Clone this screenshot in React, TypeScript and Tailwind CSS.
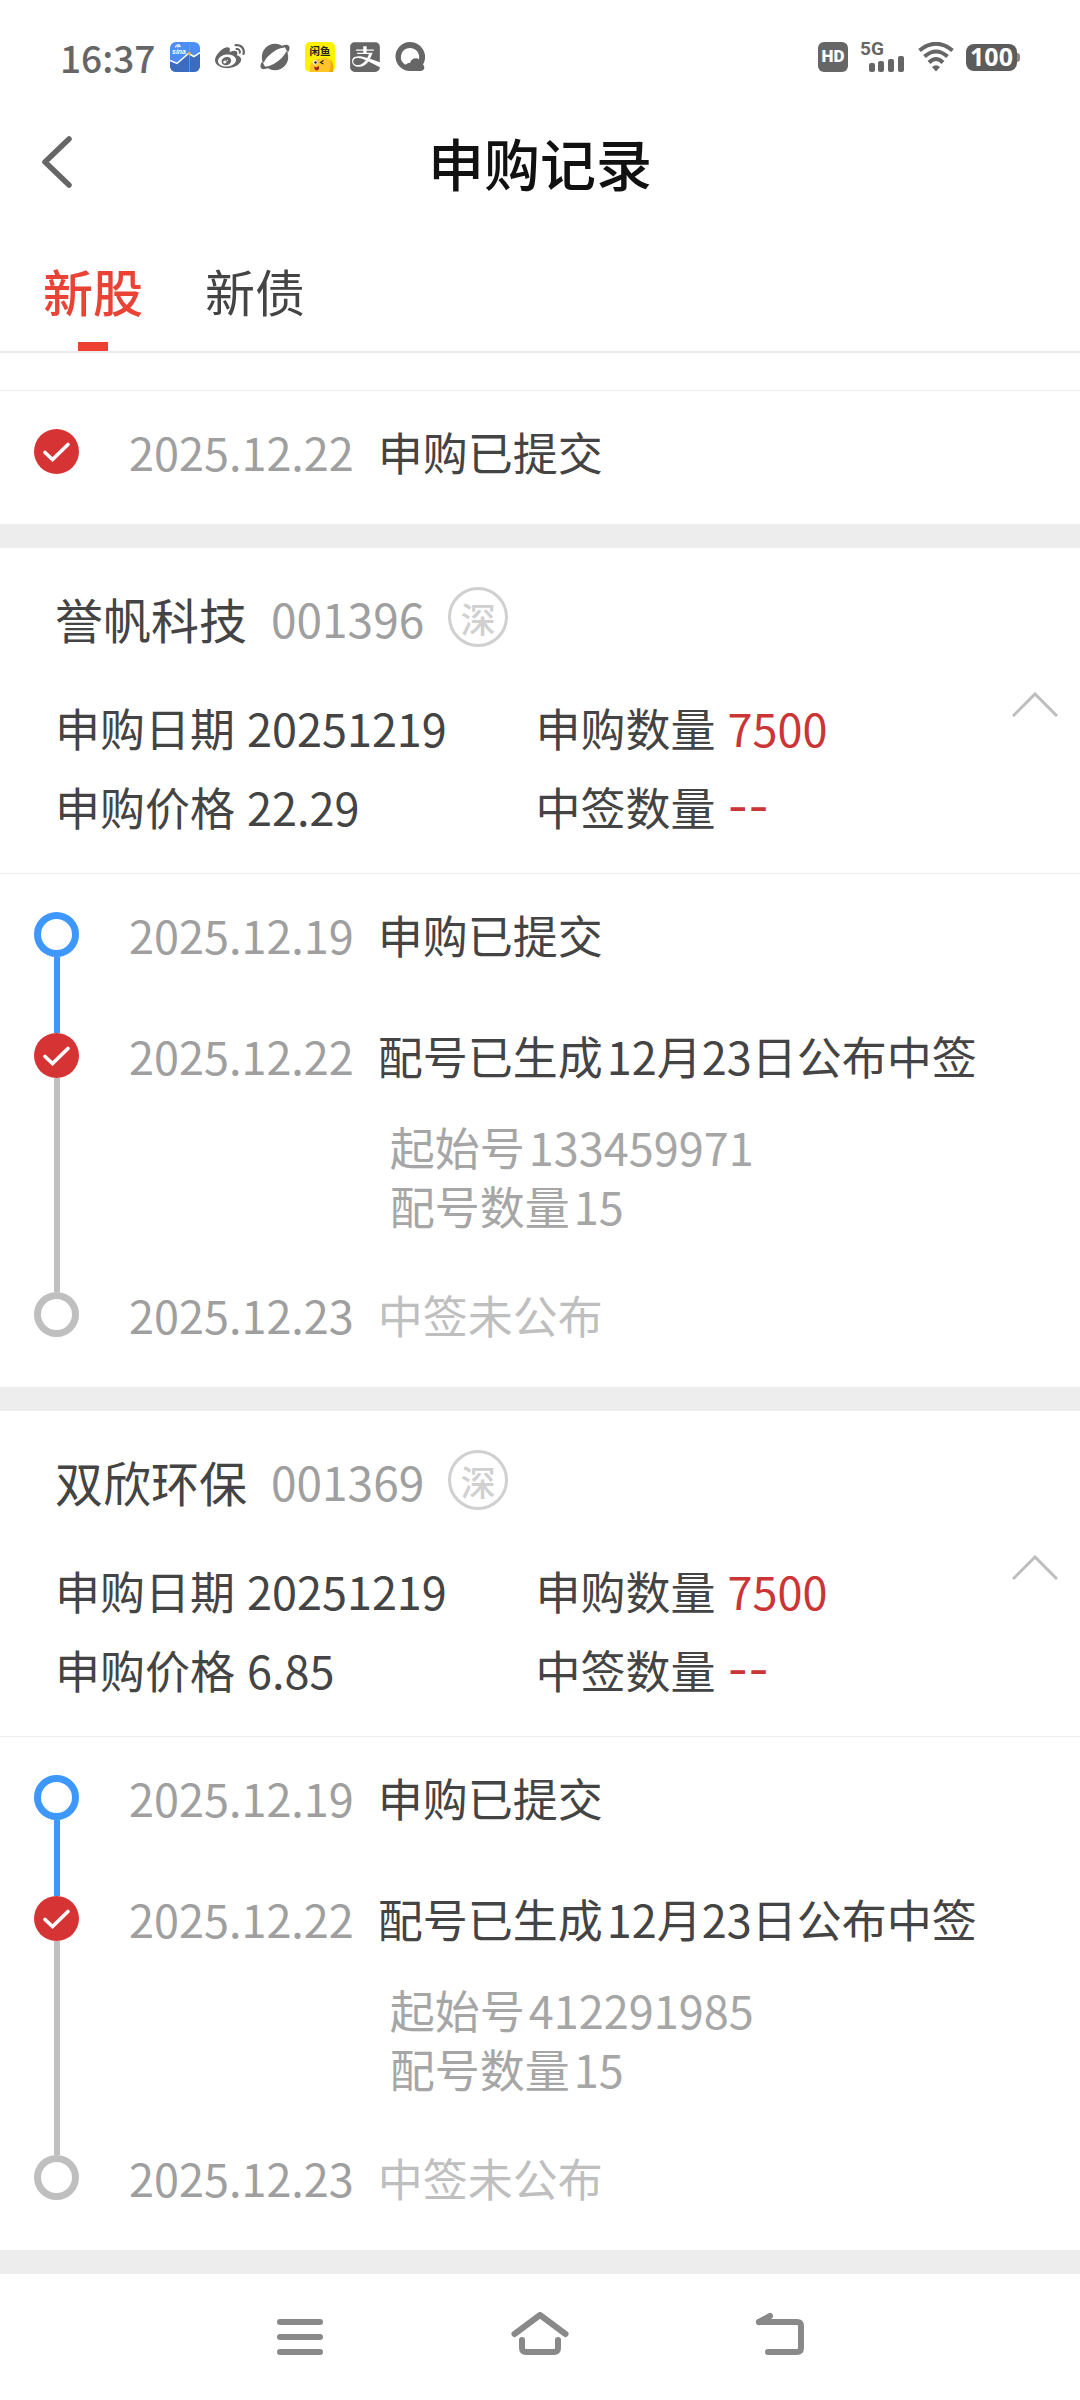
import { useState, type ReactNode } from "react";
import { FaAlipay, FaWeibo } from "react-icons/fa";

type StepState = "start" | "done" | "pending";

type Step = {
  date: string;
  state: StepState;
  title: string;
  note?: string;
  details?: { label: string; value: string }[];
};

type Subscription = {
  name: string;
  code: string;
  date: string;
  price: string;
  amount: string;
  won: string;
  steps: Step[];
};

const buildSteps = (startNo: string): Step[] => [
  { date: "2025.12.19", state: "start", title: "申购已提交" },
  {
    date: "2025.12.22",
    state: "done",
    title: "配号已生成",
    note: "12月23日公布中签",
    details: [
      { label: "起始号", value: startNo },
      { label: "配号数量", value: "15" },
    ],
  },
  { date: "2025.12.23", state: "pending", title: "中签未公布" },
];

const subscriptions: Subscription[] = [
  {
    name: "誉帆科技",
    code: "001396",
    date: "20251219",
    price: "22.29",
    amount: "7500",
    won: "--",
    steps: buildSteps("133459971"),
  },
  {
    name: "双欣环保",
    code: "001369",
    date: "20251219",
    price: "6.85",
    amount: "7500",
    won: "--",
    steps: buildSteps("412291985"),
  },
];

function FinanceIcon() {
  return (
    <svg viewBox="0 0 30 30" className="size-[30px]" aria-hidden="true">
      <rect width="30" height="30" rx="6" fill="#4d8df6" />
      <path d="M0 19 7 22 18 11 23 15 30 10V24a6 6 0 0 1-6 6H6a6 6 0 0 1-6-6Z" fill="#3b6cc0" />
      <path d="M19.500 0V30" stroke="#8b93bd" strokeWidth="0.8" />
      <path d="M0 18.500 7 21.500 18.500 11.500 24 14.500 30 10.500" fill="none" stroke="#fff" strokeWidth="1.500" />
      <circle cx="19.300" cy="11.500" r="1.700" fill="#e8a860" />
      <path d="M5.500 5.500C5.500 3 8.500 2 10 3.500M7.500 5.500c0-1.500 2.500-2 3-.5" fill="none" stroke="#fff" strokeWidth="1.200" />
      <text x="2" y="11.500" fontSize="7" fontWeight="700" fontStyle="italic" fontFamily="Liberation Sans, sans-serif" fill="#fff">
        sina
      </text>
    </svg>
  );
}

function PlanetIcon() {
  return (
    <svg viewBox="0 0 30 30" className="size-[30px] overflow-visible" aria-hidden="true">
      <circle cx="15" cy="15" r="13.200" fill="#666" />
      <ellipse cx="15" cy="15" rx="17.800" ry="6.500" transform="rotate(-38 15 15)" fill="#666" />
      <ellipse cx="15" cy="15" rx="13.600" ry="5.200" transform="rotate(-38 15 15)" fill="#fff" />
      <path d="M2.500 19.500 6 25M24 5l3.500 5.500" stroke="#fff" strokeWidth="0.800" />
    </svg>
  );
}

function XianyuIcon() {
  return (
    <svg viewBox="0 0 30 30" className="size-[30px]" aria-hidden="true">
      <rect width="30" height="30" rx="5" fill="#fff200" />
      <path d="M5 30c-1-8 2-13 9-13 3 0 4-2 6-1.500 5 1 8 6 8 14.500Z" fill="#ffc526" />
      <path d="M25 17c3 3 4 8 3 13h-4c2-4 2-9 1-13Z" fill="#f5a800" />
      <text x="15" y="13" textAnchor="middle" fontSize="10.500" fontWeight="700" fontFamily="Noto Sans CJK SC, sans-serif" fill="#222">
        闲鱼
      </text>
      <circle cx="10" cy="20.500" r="2.300" fill="#fff" />
      <circle cx="10.500" cy="20.500" r="1.200" fill="#222" />
      <path d="m18.500 18.500-3 2 3 1.500" fill="none" stroke="#222" strokeWidth="1.100" />
      <path d="M9 24.500q3 1.500 5-.5.500 4-2 4.500-2.500 0-3-4Z" fill="#a8221c" />
    </svg>
  );
}

function BrowserIcon() {
  return (
    <svg viewBox="0 0 30 30" className="size-[30px]" aria-hidden="true">
      <path
        fillRule="evenodd"
        fill="#666"
        d="M15 0a15 15 0 0 1 13 22.500c2 2 2 6-2 6.500H15A14.500 14.500 0 0 1 15 0Zm0 6a9 9 0 0 0-4.500 16.800c1.500-1.500 3-2 4.500-1.800 1-5 7-6 8.800-3.500A9 9 0 0 0 15 6Z"
      />
    </svg>
  );
}

function SignalIcon() {
  return (
    <div className="flex h-[30px] w-[46px] flex-col">
      <span className="font-[Roboto,sans-serif] text-[19px] leading-[14px] font-bold">5G</span>
      <svg viewBox="0 0 46 16" className="h-4 w-[46px] overflow-visible" fill="#666" aria-hidden="true">
        <rect x="9" y="7" width="6" height="9" rx="2" />
        <rect x="18" y="5" width="6" height="11" rx="2" />
        <rect x="28" y="3" width="6" height="13" rx="2" />
        <rect x="38" y="0" width="6" height="16" rx="2" />
      </svg>
    </div>
  );
}

function WifiIcon() {
  return (
    <svg viewBox="0 0 36 30" className="h-[30px] w-9" aria-hidden="true">
      <g fill="none" stroke="#666" strokeWidth="4">
        <path d="M1.500 8.500Q18-5 34.500 8.500" />
        <path d="M6.500 14.500Q18 4.500 29.500 14.500" />
        <path d="M11 20.500Q18 13.500 25 20.500" />
      </g>
      <path d="M14 25q4-3.500 8 0l-4 4.500Z" fill="#666" />
    </svg>
  );
}

function StatusBar() {
  return (
    <div className="flex h-[114px] items-center justify-between px-[60px] text-[#666]">
      <div className="flex items-center gap-[15px]">
        <time className="text-[37px] leading-none font-medium">16:37</time>
        <FinanceIcon />
        <FaWeibo className="size-[30px]" />
        <PlanetIcon />
        <XianyuIcon />
        <FaAlipay className="h-[34px] w-[30px]" />
        <BrowserIcon />
      </div>
      <div className="flex items-center gap-3">
        <span className="flex size-[30px] items-center justify-center rounded-md bg-[#666] font-[Roboto,sans-serif] text-[17px] font-black text-white">
          HD
        </span>
        <SignalIcon />
        <WifiIcon />
        <span className="flex items-center">
          <span className="flex h-[27px] w-[51px] items-center justify-center rounded-lg bg-[#5c5c5c] font-[Open_Sans,sans-serif] text-[25px] font-bold text-white">
            100
          </span>
          <span className="h-[9px] w-[3px] rounded-r-full bg-[#888]" />
        </span>
      </div>
    </div>
  );
}

function Tab({ active, onClick, children }: { active: boolean; onClick: () => void; children: ReactNode }) {
  return (
    <button
      type="button"
      role="tab"
      aria-selected={active}
      onClick={onClick}
      className="flex flex-col items-center pt-10 text-[50px] leading-[80px]"
    >
      <span className={active ? "font-medium text-[#ea4335]" : "text-[#444]"}>{children}</span>
      <span className={active ? "mt-3 h-[9px] w-[30px] bg-[#ef4034]" : "mt-3 h-[9px] w-[30px]"} />
    </button>
  );
}

function StepDot({ state }: { state: StepState }) {
  if (state === "done") {
    return (
      <svg viewBox="0 0 45 45" className="size-[45px] shrink-0" aria-hidden="true">
        <circle cx="22.500" cy="22.500" r="22.500" fill="#d63434" />
        <path d="m11 23.500 7.500 7L34 15.500" fill="none" stroke="#fff" strokeWidth="3.600" strokeLinecap="round" />
      </svg>
    );
  }
  return (
    <span
      className={`size-[45px] shrink-0 rounded-full border-[7px] ${
        state === "start" ? "border-[#3d97fc]" : "border-[#bfbfbf]"
      }`}
    />
  );
}

function Timeline({ steps }: { steps: Step[] }) {
  return (
    <ol className="px-[34px] pt-[38px] pb-[49px]">
      {steps.map((step, i) => {
        const last = i === steps.length - 1;
        const spacing = last ? "" : step.details ? "pb-[57px]" : "pb-[75px]";
        return (
          <li key={step.date} className="flex">
            <div className="flex w-[45px] flex-col items-center">
              <StepDot state={step.state} />
              {!last && (
                <span className={`w-[6px] flex-1 ${step.state === "start" ? "bg-[#3d97fc]" : "bg-[#bfbfbf]"}`} />
              )}
            </div>
            <div className={`flex gap-6 pl-[50px] text-[45px] leading-[46px] ${spacing}`}>
              <time className="text-[#9f9f9f]">{step.date}</time>
              <div>
                <p className={`flex gap-1 ${step.state === "pending" ? "text-[#bfbfbf]" : "text-[#444]"}`}>
                  <span>{step.title}</span>
                  {step.note && <span>{step.note}</span>}
                </p>
                {step.details && (
                  <dl className="mt-[38px] pl-3 leading-[59px] text-[#a6a6a6]">
                    {step.details.map((d) => (
                      <div key={d.label} className="flex gap-1">
                        <dt>{d.label}</dt>
                        <dd>{d.value}</dd>
                      </div>
                    ))}
                  </dl>
                )}
              </div>
            </div>
          </li>
        );
      })}
    </ol>
  );
}

function Field({ label, value, highlight }: { label: string; value: string; highlight?: boolean }) {
  const empty = value === "--";
  return (
    <div className="flex gap-3">
      <dt>{label}</dt>
      <dd className={`${highlight ? "text-[#cb3535]" : ""} ${empty ? "font-[Inter,sans-serif]" : ""}`}>{value}</dd>
    </div>
  );
}

function SubscriptionCard({ item }: { item: Subscription }) {
  const [open, setOpen] = useState(true);
  return (
    <section>
      <div className="flex items-center border-b border-[#ededed] pt-[39px] pr-[22px] pb-[27px] pl-[55px]">
        <div className="flex-1">
          <div className="flex items-start gap-6 leading-[63px]">
            <h2 className="text-[48px] text-[#444]">{item.name}</h2>
            <span className="text-[46px] text-[#9f9f9f]">{item.code}</span>
            <span className="flex size-[60px] items-center justify-center rounded-full border-[3px] border-[#d0d0d0] text-[35px] leading-none font-medium text-[#d0d0d0]">
              深
            </span>
          </div>
          <dl className="mt-[38px] grid grid-cols-2 gap-x-1 text-[45px] leading-[79px] text-[#444]">
            <Field label="申购日期" value={item.date} />
            <Field label="申购数量" value={item.amount} highlight />
            <Field label="申购价格" value={item.price} />
            <Field label="中签数量" value={item.won} highlight />
          </dl>
        </div>
        <button
          type="button"
          aria-label={open ? "收起" : "展开"}
          aria-expanded={open}
          onClick={() => setOpen(!open)}
          className="mb-6"
        >
          <svg viewBox="0 0 46 25" className={open ? "h-[25px] w-[46px]" : "h-[25px] w-[46px] rotate-180"}>
            <path d="M1 24 23 2 45 24" fill="none" stroke="#bdbdbd" strokeWidth="3" />
          </svg>
        </button>
      </div>
      {open && <Timeline steps={item.steps} />}
      <div className="h-6 bg-[#ededed]" />
    </section>
  );
}

function NavBar() {
  return (
    <nav className="flex h-[126px] items-center justify-center gap-[180px]">
      <button type="button" aria-label="最近任务">
        <svg viewBox="0 0 60 50" className="h-[50px] w-[60px]" fill="none" stroke="#898989" strokeWidth="6" strokeLinecap="round">
          <path d="M10 10H50M10 25H50M10 40H50" />
        </svg>
      </button>
      <button type="button" aria-label="主页">
        <svg viewBox="0 0 60 50" className="h-[50px] w-[60px]" fill="none" stroke="#898989" strokeWidth="6" strokeLinecap="round">
          <path d="M4.500 22 30 3 55.500 22" strokeLinejoin="round" />
          <path d="M12 28V36q0 4 4 4H44q4 0 4-4V28" />
        </svg>
      </button>
      <button type="button" aria-label="返回">
        <svg viewBox="0 0 60 50" className="h-[50px] w-[60px]" fill="none" stroke="#898989" strokeWidth="6" strokeLinecap="round">
          <path d="M9 10H47q4 0 4 4V36q0 4-4 4H18" />
          <path d="M9 10 20 4" />
        </svg>
      </button>
    </nav>
  );
}

export default function App() {
  const [tab, setTab] = useState<"stock" | "bond">("stock");

  return (
    <div className="min-h-screen bg-white font-[Noto_Sans_CJK_SC,sans-serif]" lang="zh-CN">
      <StatusBar />
      <header className="grid h-24 grid-cols-3 items-center">
        <button type="button" aria-label="返回上一页" className="pl-10">
          <svg viewBox="0 0 34 52" className="h-[52px] w-[34px]" fill="none" stroke="#666" strokeWidth="5.500" strokeLinecap="round" strokeLinejoin="round">
            <path d="M29 3 5 26 29 49" />
          </svg>
        </button>
        <h1 className="text-center text-[56px] leading-none font-medium text-[#111]">申购记录</h1>
      </header>
      <div role="tablist" className="flex gap-[62px] border-b-2 border-[#ececec] px-[43px]">
        <Tab active={tab === "stock"} onClick={() => setTab("stock")}>
          新股
        </Tab>
        <Tab active={tab === "bond"} onClick={() => setTab("bond")}>
          新债
        </Tab>
      </div>

      <main>
        <div className="h-[38px] border-b border-[#ededed]" />
        <Timeline steps={[{ date: "2025.12.22", state: "done", title: "申购已提交" }]} />
        <div className="h-6 bg-[#ededed]" />
        {subscriptions.map((item) => (
          <SubscriptionCard key={item.code} item={item} />
        ))}
      </main>

      <NavBar />
    </div>
  );
}
